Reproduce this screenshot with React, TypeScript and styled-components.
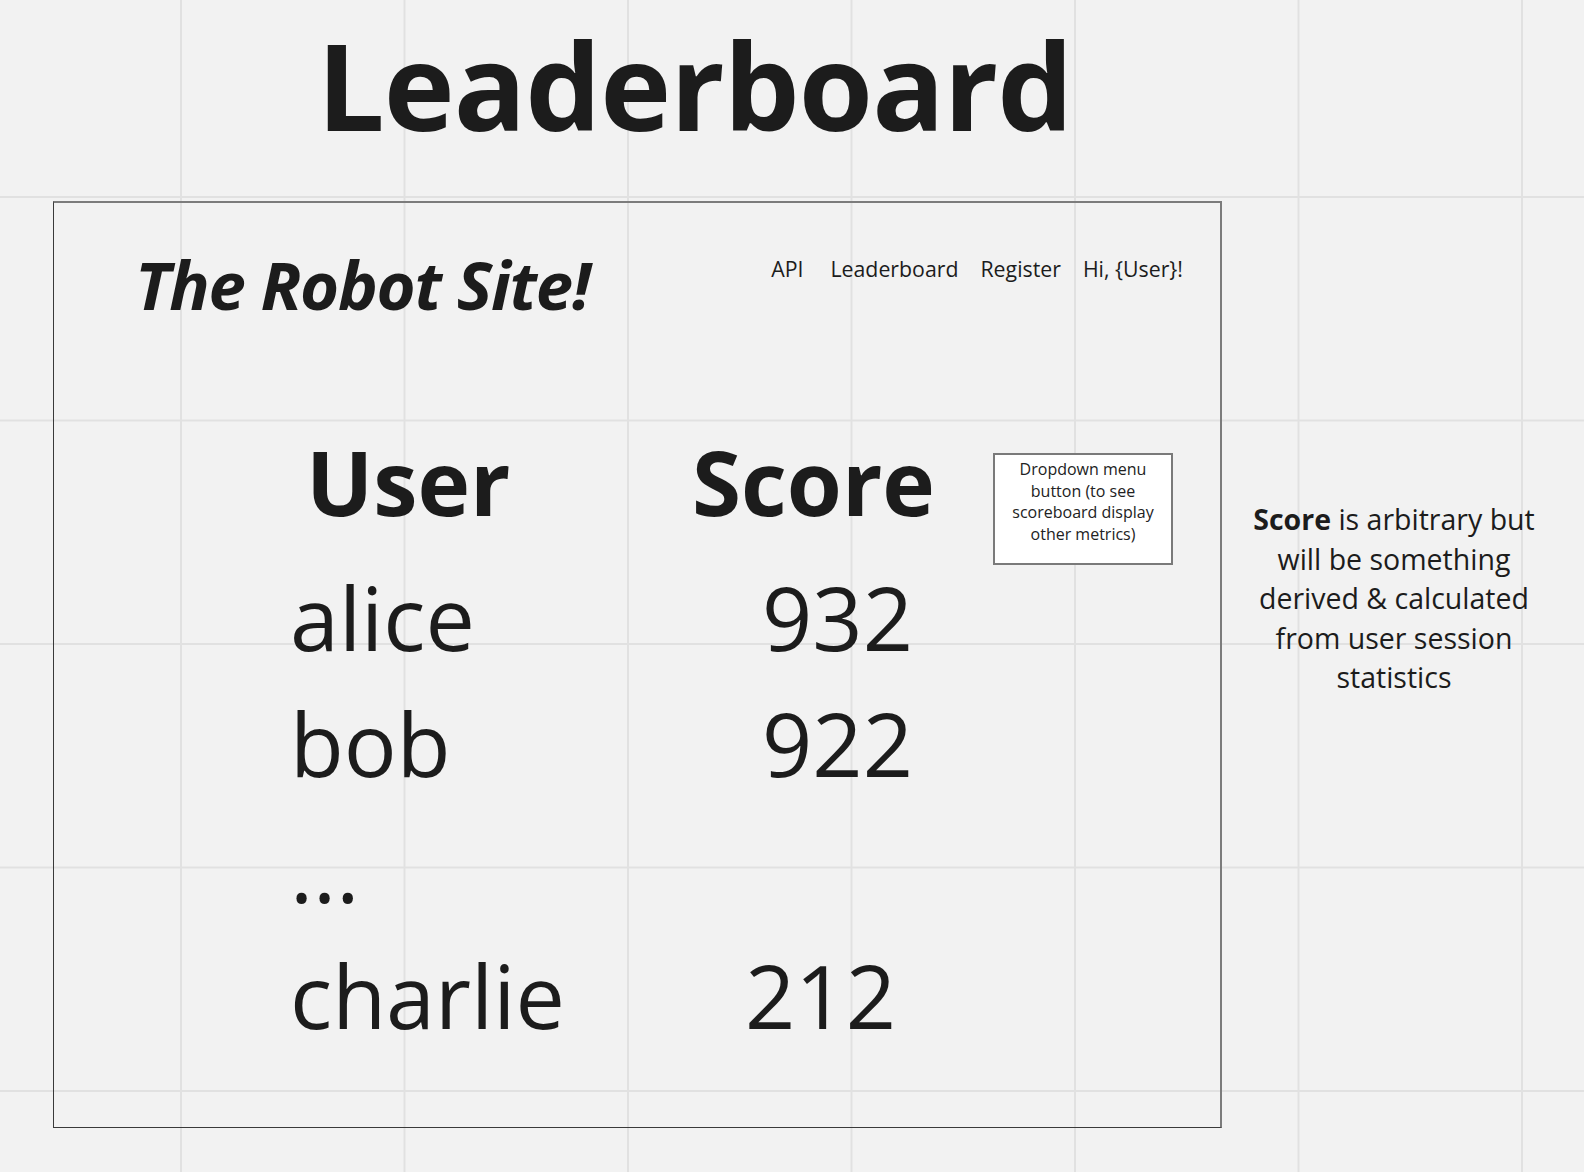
import React from "react";
import styled, { createGlobalStyle } from "styled-components";

const GlobalStyle = createGlobalStyle`
  html, body {
    margin: 0;
    padding: 0;
    background: #f2f2f2;
  }
  body {
    font-family: "Open Sans", "Noto Sans", sans-serif;
    color: #1c1c1c;
  }
`;

const Canvas = styled.main`
  box-sizing: border-box;
  min-height: 1172px;
  padding-top: 25px;
  background-color: #f2f2f2;
  background-image:
    linear-gradient(to right, #e1e1e1 0, #e1e1e1 2px, transparent 2px),
    linear-gradient(to bottom, #e1e1e1 0, #e1e1e1 2px, transparent 2px);
  background-size: 223.5px 223.5px;
  background-position: 180px 196px;
`;

const Title = styled.h1`
  margin: 0 0 0 317px;
  font: 700 120px/120px "Open Sans", sans-serif;
  letter-spacing: -0.95px;
  color: #1c1c1c;
`;

const Board = styled.div`
  display: flex;
  align-items: flex-start;
  margin-top: 56px;
  padding-left: 53px;
`;

const Frame = styled.section`
  box-sizing: border-box;
  width: 1169px;
  height: 927px;
  border-top: 2px solid #7c7c7c;
  border-right: 2px solid #7c7c7c;
  border-left: 1px solid #3a3a3a;
  border-bottom: 1px solid #3a3a3a;
  padding: 48px 37px 0 81px;
`;

const SiteHeader = styled.header`
  display: flex;
  justify-content: space-between;
  align-items: flex-start;
`;

const Logo = styled.div`
  font: italic 700 67px/67px "Open Sans", sans-serif;
  letter-spacing: -1.3px;
  color: #1c1c1c;
`;

const Nav = styled.nav`
  display: flex;
  gap: 22px;
  margin-top: 7px;
`;

const NavLink = styled.a<{ $extra?: number }>`
  font: 400 21.3px/21px "Open Sans", sans-serif;
  color: #1c1c1c;
  text-decoration: none;
  margin-right: ${(p) => p.$extra ?? 0}px;
`;

const Table = styled.div`
  margin: 119px 0 0 155px;
`;

const Row = styled.div`
  display: grid;
  grid-template-columns: 400px 303px 180px;
  align-items: start;
`;

const HeaderRow = styled(Row)`
  height: 89px;
  margin-bottom: 28px;
`;

const HeadCell = styled.div<{ $indent?: number }>`
  font: 700 89px/89px "Open Sans", sans-serif;
  color: #1c1c1c;
  padding-left: ${(p) => p.$indent ?? 0}px;
`;

const Cell = styled.div<{ $indent?: number }>`
  font: 400 88px/126px "Open Sans", sans-serif;
  color: #1c1c1c;
  padding-left: ${(p) => p.$indent ?? 0}px;
  white-space: nowrap;
`;

const DropdownNote = styled.div`
  box-sizing: border-box;
  width: 180px;
  height: 112px;
  margin-top: 16px;
  padding-top: 4px;
  border: 2px solid #7a7a7a;
  background: #ffffff;
  font: 400 16px/21.7px "Open Sans", sans-serif;
  color: #222;
  text-align: center;
`;

const SideNote = styled.p`
  width: 320px;
  margin: 299px 0 0 12px;
  font: 400 28.5px/39.5px "Open Sans", sans-serif;
  color: #1c1c1c;
  text-align: center;
`;

const rows = [
  { user: "alice", score: "932", shift: 70 },
  { user: "bob", score: "922", shift: 70 },
  { user: "...", score: "", shift: 0 },
  { user: "charlie", score: "212", shift: 53 },
];

export default function App() {
  return (
    <>
      <GlobalStyle />
      <Canvas>
        <Title>Leaderboard</Title>
        <Board>
          <Frame>
            <SiteHeader>
              <Logo>The Robot Site!</Logo>
              <Nav>
                <NavLink $extra={5}>API</NavLink>
                <NavLink>Leaderboard</NavLink>
                <NavLink>Register</NavLink>
                <NavLink>Hi, {"{User}"}!</NavLink>
              </Nav>
            </SiteHeader>
            <Table>
              <HeaderRow>
                <HeadCell $indent={16}>User</HeadCell>
                <HeadCell $indent={2}>Score</HeadCell>
                <DropdownNote>
                  Dropdown menu
                  <br />
                  button (to see
                  <br />
                  scoreboard display
                  <br />
                  other metrics)
                </DropdownNote>
              </HeaderRow>
              {rows.map((r) => (
                <Row key={r.user}>
                  <Cell>{r.user}</Cell>
                  <Cell $indent={r.shift + 2}>{r.score}</Cell>
                </Row>
              ))}
            </Table>
          </Frame>
          <SideNote>
            <strong>Score</strong> is arbitrary but
            <br />
            will be something
            <br />
            derived &amp; calculated
            <br />
            from user session
            <br />
            statistics
          </SideNote>
        </Board>
      </Canvas>
    </>
  );
}
